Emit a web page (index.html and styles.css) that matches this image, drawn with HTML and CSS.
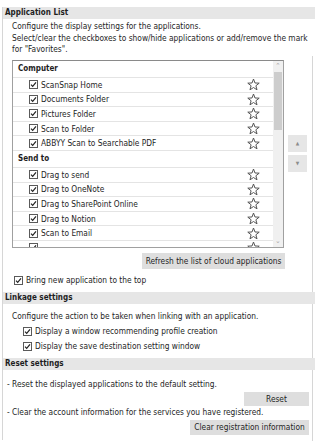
FILE: index.html
```html
<!DOCTYPE html>
<html>
<head>
<meta charset="utf-8">
<link rel="stylesheet" href="styles.css">
</head>
<body>
<div class="panel">
  <div class="head">Application List</div>
  <div class="intro">
    <p>Configure the display settings for the applications.</p>
    <p>Select/clear the checkboxes to show/hide applications or add/remove the mark for "Favorites".</p>
  </div>
  <div class="framed">
    <div class="list-row">
      <div class="listbox">
        <div class="items">
          <div class="group">Computer</div>
          <div class="item"><span class="cb"><svg width="9" height="9" viewBox="0 0 9 9"><rect x="0.5" y="0.5" width="8" height="8" fill="#fff" stroke="#5a5a5a"/><path d="M2 4.6 L3.7 6.4 L7 2.4" fill="none" stroke="#222" stroke-width="1.2"/></svg></span><span class="label">ScanSnap Home</span><span class="star"><svg width="13" height="13" viewBox="0 0 13 13"><polygon points="6.5,1 7.97,4.98 12.21,5.15 8.88,7.77 10.03,11.85 6.5,9.5 2.97,11.85 4.12,7.77 0.79,5.15 5.03,4.98" fill="#fff" stroke="#555" stroke-linejoin="round"/></svg></span></div>
          <div class="item"><span class="cb"><svg width="9" height="9" viewBox="0 0 9 9"><rect x="0.5" y="0.5" width="8" height="8" fill="#fff" stroke="#5a5a5a"/><path d="M2 4.6 L3.7 6.4 L7 2.4" fill="none" stroke="#222" stroke-width="1.2"/></svg></span><span class="label">Documents Folder</span><span class="star"><svg width="13" height="13" viewBox="0 0 13 13"><polygon points="6.5,1 7.97,4.98 12.21,5.15 8.88,7.77 10.03,11.85 6.5,9.5 2.97,11.85 4.12,7.77 0.79,5.15 5.03,4.98" fill="#fff" stroke="#555" stroke-linejoin="round"/></svg></span></div>
          <div class="item"><span class="cb"><svg width="9" height="9" viewBox="0 0 9 9"><rect x="0.5" y="0.5" width="8" height="8" fill="#fff" stroke="#5a5a5a"/><path d="M2 4.6 L3.7 6.4 L7 2.4" fill="none" stroke="#222" stroke-width="1.2"/></svg></span><span class="label">Pictures Folder</span><span class="star"><svg width="13" height="13" viewBox="0 0 13 13"><polygon points="6.5,1 7.97,4.98 12.21,5.15 8.88,7.77 10.03,11.85 6.5,9.5 2.97,11.85 4.12,7.77 0.79,5.15 5.03,4.98" fill="#fff" stroke="#555" stroke-linejoin="round"/></svg></span></div>
          <div class="item"><span class="cb"><svg width="9" height="9" viewBox="0 0 9 9"><rect x="0.5" y="0.5" width="8" height="8" fill="#fff" stroke="#5a5a5a"/><path d="M2 4.6 L3.7 6.4 L7 2.4" fill="none" stroke="#222" stroke-width="1.2"/></svg></span><span class="label">Scan to Folder</span><span class="star"><svg width="13" height="13" viewBox="0 0 13 13"><polygon points="6.5,1 7.97,4.98 12.21,5.15 8.88,7.77 10.03,11.85 6.5,9.5 2.97,11.85 4.12,7.77 0.79,5.15 5.03,4.98" fill="#fff" stroke="#555" stroke-linejoin="round"/></svg></span></div>
          <div class="item"><span class="cb"><svg width="9" height="9" viewBox="0 0 9 9"><rect x="0.5" y="0.5" width="8" height="8" fill="#fff" stroke="#5a5a5a"/><path d="M2 4.6 L3.7 6.4 L7 2.4" fill="none" stroke="#222" stroke-width="1.2"/></svg></span><span class="label">ABBYY Scan to Searchable PDF</span><span class="star"><svg width="13" height="13" viewBox="0 0 13 13"><polygon points="6.5,1 7.97,4.98 12.21,5.15 8.88,7.77 10.03,11.85 6.5,9.5 2.97,11.85 4.12,7.77 0.79,5.15 5.03,4.98" fill="#fff" stroke="#555" stroke-linejoin="round"/></svg></span></div>
          <div class="group">Send to</div>
          <div class="item"><span class="cb"><svg width="9" height="9" viewBox="0 0 9 9"><rect x="0.5" y="0.5" width="8" height="8" fill="#fff" stroke="#5a5a5a"/><path d="M2 4.6 L3.7 6.4 L7 2.4" fill="none" stroke="#222" stroke-width="1.2"/></svg></span><span class="label">Drag to send</span><span class="star"><svg width="13" height="13" viewBox="0 0 13 13"><polygon points="6.5,1 7.97,4.98 12.21,5.15 8.88,7.77 10.03,11.85 6.5,9.5 2.97,11.85 4.12,7.77 0.79,5.15 5.03,4.98" fill="#fff" stroke="#555" stroke-linejoin="round"/></svg></span></div>
          <div class="item"><span class="cb"><svg width="9" height="9" viewBox="0 0 9 9"><rect x="0.5" y="0.5" width="8" height="8" fill="#fff" stroke="#5a5a5a"/><path d="M2 4.6 L3.7 6.4 L7 2.4" fill="none" stroke="#222" stroke-width="1.2"/></svg></span><span class="label">Drag to OneNote</span><span class="star"><svg width="13" height="13" viewBox="0 0 13 13"><polygon points="6.5,1 7.97,4.98 12.21,5.15 8.88,7.77 10.03,11.85 6.5,9.5 2.97,11.85 4.12,7.77 0.79,5.15 5.03,4.98" fill="#fff" stroke="#555" stroke-linejoin="round"/></svg></span></div>
          <div class="item"><span class="cb"><svg width="9" height="9" viewBox="0 0 9 9"><rect x="0.5" y="0.5" width="8" height="8" fill="#fff" stroke="#5a5a5a"/><path d="M2 4.6 L3.7 6.4 L7 2.4" fill="none" stroke="#222" stroke-width="1.2"/></svg></span><span class="label">Drag to SharePoint Online</span><span class="star"><svg width="13" height="13" viewBox="0 0 13 13"><polygon points="6.5,1 7.97,4.98 12.21,5.15 8.88,7.77 10.03,11.85 6.5,9.5 2.97,11.85 4.12,7.77 0.79,5.15 5.03,4.98" fill="#fff" stroke="#555" stroke-linejoin="round"/></svg></span></div>
          <div class="item"><span class="cb"><svg width="9" height="9" viewBox="0 0 9 9"><rect x="0.5" y="0.5" width="8" height="8" fill="#fff" stroke="#5a5a5a"/><path d="M2 4.6 L3.7 6.4 L7 2.4" fill="none" stroke="#222" stroke-width="1.2"/></svg></span><span class="label">Drag to Notion</span><span class="star"><svg width="13" height="13" viewBox="0 0 13 13"><polygon points="6.5,1 7.97,4.98 12.21,5.15 8.88,7.77 10.03,11.85 6.5,9.5 2.97,11.85 4.12,7.77 0.79,5.15 5.03,4.98" fill="#fff" stroke="#555" stroke-linejoin="round"/></svg></span></div>
          <div class="item"><span class="cb"><svg width="9" height="9" viewBox="0 0 9 9"><rect x="0.5" y="0.5" width="8" height="8" fill="#fff" stroke="#5a5a5a"/><path d="M2 4.6 L3.7 6.4 L7 2.4" fill="none" stroke="#222" stroke-width="1.2"/></svg></span><span class="label">Scan to Email</span><span class="star"><svg width="13" height="13" viewBox="0 0 13 13"><polygon points="6.5,1 7.97,4.98 12.21,5.15 8.88,7.77 10.03,11.85 6.5,9.5 2.97,11.85 4.12,7.77 0.79,5.15 5.03,4.98" fill="#fff" stroke="#555" stroke-linejoin="round"/></svg></span></div>
          <div class="item"><span class="cb"><svg width="9" height="9" viewBox="0 0 9 9"><rect x="0.5" y="0.5" width="8" height="8" fill="#fff" stroke="#5a5a5a"/><path d="M2 4.6 L3.7 6.4 L7 2.4" fill="none" stroke="#222" stroke-width="1.2"/></svg></span><span class="label"></span><span class="star"><svg width="13" height="13" viewBox="0 0 13 13"><polygon points="6.5,1 7.97,4.98 12.21,5.15 8.88,7.77 10.03,11.85 6.5,9.5 2.97,11.85 4.12,7.77 0.79,5.15 5.03,4.98" fill="#fff" stroke="#555" stroke-linejoin="round"/></svg></span></div>
        </div>
        <div class="scrollbar">
          <div class="sb-arrow">&#8963;</div>
          <div class="sb-thumb"></div>
          <div class="sb-fill"></div>
          <div class="sb-arrow">&#8964;</div>
        </div>
      </div>
      <div class="arrows">
        <div class="arrow-btn">&#9650;</div>
        <div class="arrow-btn">&#9660;</div>
      </div>
    </div>
    <div class="btn-row refresh-row"><div class="btn">Refresh the list of cloud applications</div></div>
    <div class="check-line bring"><span class="cb"><svg width="9" height="9" viewBox="0 0 9 9"><rect x="0.5" y="0.5" width="8" height="8" fill="#fff" stroke="#5a5a5a"/><path d="M2 4.6 L3.7 6.4 L7 2.4" fill="none" stroke="#222" stroke-width="1.2"/></svg></span><span>Bring new application to the top</span></div>

    <div class="head sub">Linkage settings</div>
    <p class="text linkage-text">Configure the action to be taken when linking with an application.</p>
    <div class="check-line option"><span class="cb"><svg width="9" height="9" viewBox="0 0 9 9"><rect x="0.5" y="0.5" width="8" height="8" fill="#fff" stroke="#5a5a5a"/><path d="M2 4.6 L3.7 6.4 L7 2.4" fill="none" stroke="#222" stroke-width="1.2"/></svg></span><span>Display a window recommending profile creation</span></div>
    <div class="check-line option"><span class="cb"><svg width="9" height="9" viewBox="0 0 9 9"><rect x="0.5" y="0.5" width="8" height="8" fill="#fff" stroke="#5a5a5a"/><path d="M2 4.6 L3.7 6.4 L7 2.4" fill="none" stroke="#222" stroke-width="1.2"/></svg></span><span>Display the save destination setting window</span></div>

    <div class="head sub reset-head">Reset settings</div>
    <p class="text reset-text">- Reset the displayed applications to the default setting.</p>
    <div class="btn-row small-row"><div class="btn reset-btn">Reset</div></div>
    <p class="text clear-text">- Clear the account information for the services you have registered.</p>
    <div class="btn-row small-row"><div class="btn clear-btn">Clear registration information</div></div>
  </div>
</div>
</body>
</html>
```

FILE: styles.css
```css
* { box-sizing: border-box; }
html, body { margin: 0; padding: 0; background: #fff; }
body {
  width: 315px;
  height: 448px;
  overflow: hidden;
  font-family: "DejaVu Sans Condensed", "DejaVu Sans", sans-serif;
  font-size: 8.3px;
  color: #1e1e1e;
}
p { margin: 0; }

.panel {
  margin: 7px 0 0 2px;
  border-left: 1px solid #d6d6d6;
  height: 433px;
  width: 313px;
}

.head {
  height: 12px;
  line-height: 12px;
  background: #e6e6e6;
  font-weight: bold;
  font-size: 8px;
  padding-left: 2px;
  width: 312px;
}

.intro {
  padding: 2px 0 0 9px;
  line-height: 11.5px;
}

.framed {
  border-right: 1px solid #d6d6d6;
  width: 310px;
  height: 385px;
}
.framed .head { width: 312px; }

.list-row {
  display: flex;
  padding: 4.5px 0 0 9px;
}
.listbox {
  width: 272px;
  height: 188px;
  border: 1px solid #a0a0a0;
  border-top-color: #8a8a8a;
  display: flex;
}
.items {
  flex: 1;
  overflow: hidden;
}
.group {
  height: 17px;
  line-height: 16px;
  padding-left: 5px;
  font-weight: bold;
  font-size: 8px;
  border-bottom: 1px solid #e4e4e4;
}
.item {
  height: 14.6px;
  display: flex;
  align-items: center;
  padding-left: 16px;
  border-bottom: 1px solid #e4e4e4;
  flex-shrink: 0;
}
.cb { display: flex; width: 9px; height: 9px; flex-shrink: 0; }
.item .label { margin-left: 3px; }
.star { margin-left: auto; margin-right: 13px; display: flex; }

.scrollbar {
  width: 10px;
  background: #f0f0f0;
  display: flex;
  flex-direction: column;
}
.sb-arrow {
  height: 11px;
  font-size: 7px;
  line-height: 11px;
  text-align: center;
  color: #a6a6a6;
}
.sb-thumb {
  height: 58px;
  background: #cdcdcd;
  margin: 0 1px;
}
.sb-fill { flex: 1; }

.arrows {
  display: flex;
  flex-direction: column;
  gap: 3px;
  margin-left: 4px;
  padding-top: 75px;
}
.arrow-btn {
  width: 19px;
  height: 17px;
  background: #e6e6e6;
  color: #8c8c8c;
  font-size: 5px;
  line-height: 17px;
  text-align: center;
}

.btn-row { display: flex; justify-content: flex-end; }
.btn {
  background: #dedede;
  text-align: center;
  white-space: nowrap;
}
.refresh-row { margin-top: 5px; padding-right: 27px; }
.refresh-row .btn { width: 143px; height: 16px; line-height: 16px; }

.check-line {
  display: flex;
  align-items: center;
  height: 12px;
  gap: 3px;
}
.bring { margin-top: 5px; padding-left: 11px; }

.sub { margin-top: 6px; }
.text { line-height: 12px; white-space: nowrap; }
.linkage-text { margin-top: 6px; padding-left: 9px; }
.option { padding-left: 20px; gap: 3px; margin-top: 3px; }

.reset-head { margin-top: 6px; }
.reset-text { margin-top: 8px; padding-left: 4px; }
.small-row { padding-right: 3px; margin-top: 2px; }
.reset-btn { width: 65px; height: 14px; line-height: 14px; }
.clear-text { padding-left: 4px; }
.clear-btn { width: 119px; height: 15px; line-height: 15px; }
```
